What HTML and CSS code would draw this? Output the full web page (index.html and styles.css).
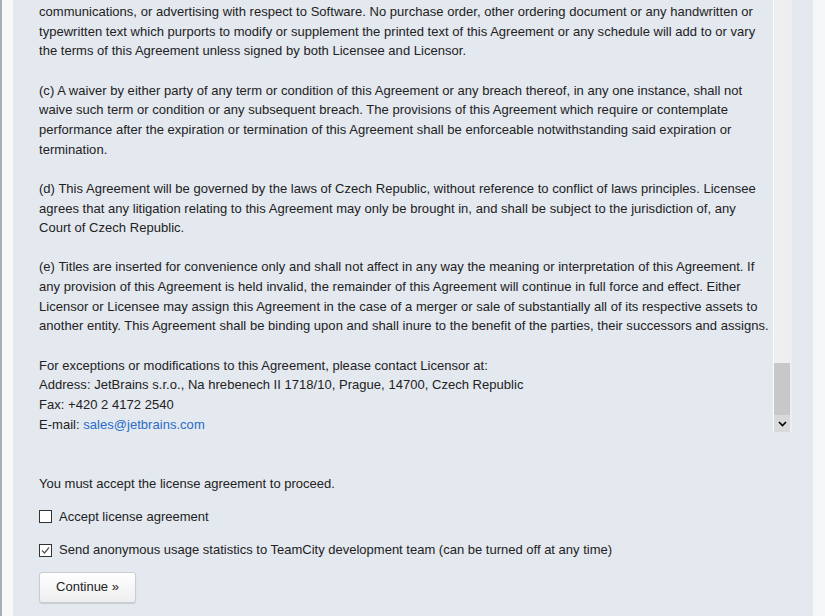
FILE: index.html
```html
<!DOCTYPE html>
<html>
<head>
<meta charset="utf-8">
<link rel="stylesheet" href="styles.css">
</head>
<body>
<div class="frame">
  <div class="panel">
    <div class="license">
      <div class="license-text">
        <p>communications, or advertising with respect to Software. No purchase order, other ordering document or any handwritten or<br>
        typewritten text which purports to modify or supplement the printed text of this Agreement or any schedule will add to or vary<br>
        the terms of this Agreement unless signed by both Licensee and Licensor.</p>
        <p>(c) A waiver by either party of any term or condition of this Agreement or any breach thereof, in any one instance, shall not<br>
        waive such term or condition or any subsequent breach. The provisions of this Agreement which require or contemplate<br>
        performance after the expiration or termination of this Agreement shall be enforceable notwithstanding said expiration or<br>
        termination.</p>
        <p>(d) This Agreement will be governed by the laws of Czech Republic, without reference to conflict of laws principles. Licensee<br>
        agrees that any litigation relating to this Agreement may only be brought in, and shall be subject to the jurisdiction of, any<br>
        Court of Czech Republic.</p>
        <p>(e) Titles are inserted for convenience only and shall not affect in any way the meaning or interpretation of this Agreement. If<br>
        any provision of this Agreement is held invalid, the remainder of this Agreement will continue in full force and effect. Either<br>
        Licensor or Licensee may assign this Agreement in the case of a merger or sale of substantially all of its respective assets to<br>
        another entity. This Agreement shall be binding upon and shall inure to the benefit of the parties, their successors and assigns.</p>
        <p>For exceptions or modifications to this Agreement, please contact Licensor at:<br>
        Address: JetBrains s.r.o., Na hrebenech II 1718/10, Prague, 14700, Czech Republic<br>
        Fax: +420 2 4172 2540<br>
        E-mail: <a href="#" class="link">sales@jetbrains.com</a></p>
      </div>
      <div class="scrollbar">
        <div class="track"></div>
        <div class="thumb"></div>
        <div class="arrow">
          <svg width="9" height="6" viewBox="0 0 9 6"><path d="M1 1 L4.5 4.5 L8 1" fill="none" stroke="#000" stroke-width="1.6"/></svg>
        </div>
      </div>
      <div class="gutter"></div>
    </div>

    <div class="accept">
      <p class="notice">You must accept the license agreement to proceed.</p>
      <label class="check-row">
        <span class="box"></span>
        <span>Accept license agreement</span>
      </label>
      <label class="check-row">
        <span class="box">
          <svg width="11" height="11" viewBox="0 0 11 11"><path d="M2 5.5 L4.5 8 L9 2.5" fill="none" stroke="#555" stroke-width="1.2"/></svg>
        </span>
        <span>Send anonymous usage statistics to TeamCity development team (can be turned off at any time)</span>
      </label>
      <button class="btn">Continue &raquo;</button>
    </div>
  </div>
</div>
</body>
</html>
```

FILE: styles.css
```css
html, body {
  margin: 0;
  padding: 0;
}
body {
  background: #f6f7f9;
  font-family: "Liberation Sans", Arial, sans-serif;
  font-size: 13px;
  color: #222;
  width: 825px;
  height: 616px;
  overflow: hidden;
}
.frame {
  border-left: 2px solid #a9adb6;
  padding-left: 11px;
  background: #f8f8f8;
  width: 800px;
  height: 616px;
}
.panel {
  background: #e4e8ef;
  width: 800px;
  height: 616px;
  padding-left: 26px;
  box-sizing: border-box;
}
.license {
  display: flex;
  height: 432px;
  overflow: hidden;
}
.license-text {
  width: 734px;
  min-width: 734px;
  line-height: 19.65px;
  padding-top: 2px;
  white-space: nowrap;
  letter-spacing: 0.03px;
}
.license-text p {
  margin: 0 0 19.65px 0;
}
.link {
  color: #2a6bc8;
  text-decoration: none;
}
.scrollbar {
  width: 16px;
  min-width: 16px;
  border-left: 1px solid #fbfbfb;
  display: flex;
  flex-direction: column;
}
.track {
  flex: 1;
  background: #efefef;
}
.thumb {
  height: 52px;
  background: #c8c8c8;
}
.arrow {
  height: 17px;
  background: #d9d9d9;
  display: flex;
  align-items: center;
  justify-content: center;
}
.gutter {
  width: 2px;
  min-width: 2px;
  background: #eceef2;
}
.accept {
  padding-top: 42px;
  line-height: 19.65px;
}
.notice {
  margin: 0;
}
.check-row {
  display: flex;
  align-items: center;
  margin-top: 13.5px;
}
.box {
  width: 11px;
  height: 11px;
  border: 1px solid #333;
  background: #fff;
  margin-right: 7px;
  display: flex;
  align-items: center;
  justify-content: center;
}
.btn {
  margin-top: 12px;
  width: 97px;
  height: 31px;
  font-family: "Liberation Sans", Arial, sans-serif;
  font-size: 13px;
  color: #222;
  background: linear-gradient(#ffffff, #eeeeee);
  border: 1px solid #c9ccd1;
  border-radius: 3px;
  box-shadow: 0 1px 1px rgba(0,0,0,0.12);
  padding: 0 0 1px 0;
}
```
